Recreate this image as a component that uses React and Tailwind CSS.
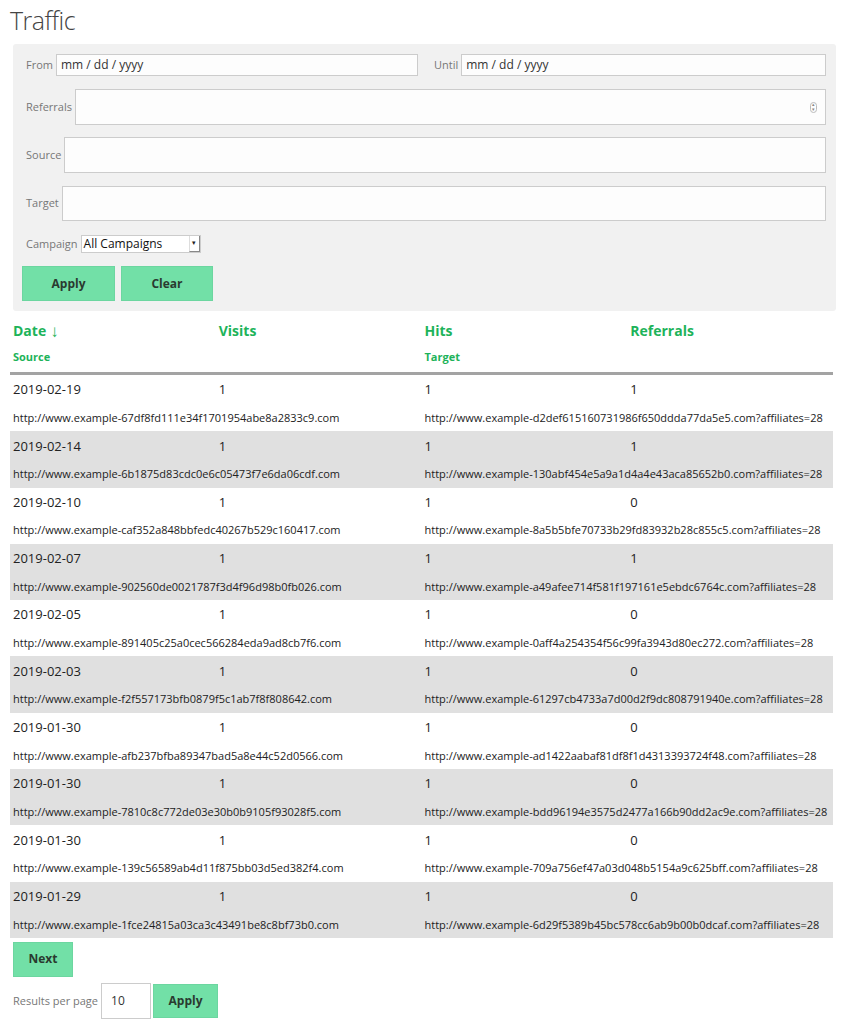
import React from 'react';

const ROWS = [
  ['2019-02-19', '1', '1', '1', 'http://www.example-67df8fd111e34f1701954abe8a2833c9.com', 'http://www.example-d2def615160731986f650ddda77da5e5.com?affiliates=28'],
  ['2019-02-14', '1', '1', '1', 'http://www.example-6b1875d83cdc0e6c05473f7e6da06cdf.com', 'http://www.example-130abf454e5a9a1d4a4e43aca85652b0.com?affiliates=28'],
  ['2019-02-10', '1', '1', '0', 'http://www.example-caf352a848bbfedc40267b529c160417.com', 'http://www.example-8a5b5bfe70733b29fd83932b28c855c5.com?affiliates=28'],
  ['2019-02-07', '1', '1', '1', 'http://www.example-902560de0021787f3d4f96d98b0fb026.com', 'http://www.example-a49afee714f581f197161e5ebdc6764c.com?affiliates=28'],
  ['2019-02-05', '1', '1', '0', 'http://www.example-891405c25a0cec566284eda9ad8cb7f6.com', 'http://www.example-0aff4a254354f56c99fa3943d80ec272.com?affiliates=28'],
  ['2019-02-03', '1', '1', '0', 'http://www.example-f2f557173bfb0879f5c1ab7f8f808642.com', 'http://www.example-61297cb4733a7d00d2f9dc808791940e.com?affiliates=28'],
  ['2019-01-30', '1', '1', '0', 'http://www.example-afb237bfba89347bad5a8e44c52d0566.com', 'http://www.example-ad1422aabaf81df8f1d4313393724f48.com?affiliates=28'],
  ['2019-01-30', '1', '1', '0', 'http://www.example-7810c8c772de03e30b0b9105f93028f5.com', 'http://www.example-bdd96194e3575d2477a166b90dd2ac9e.com?affiliates=28'],
  ['2019-01-30', '1', '1', '0', 'http://www.example-139c56589ab4d11f875bb03d5ed382f4.com', 'http://www.example-709a756ef47a03d048b5154a9c625bff.com?affiliates=28'],
  ['2019-01-29', '1', '1', '0', 'http://www.example-1fce24815a03ca3c43491be8c8bf73b0.com', 'http://www.example-6d29f5389b45bc578cc6ab9b00b0dcaf.com?affiliates=28'],
];

const FONT = "font-['Open_Sans',Roboto,sans-serif]";

function Field({ label, className = 'h-[36px]', children }) {
  return (
    <div className="flex items-center gap-[3px]">
      <span className="text-[11px] text-[#777] whitespace-nowrap">{label}</span>
      <div className={`flex-1 flex items-center bg-[#fdfdfd] border border-[#ccc] ${className}`}>
        {children}
      </div>
    </div>
  );
}

export default function App() {
  return (
    <div className={`${FONT} bg-white w-[847px] min-h-[1024px] text-[#333]`}>
      <h1 className="pl-[10px] pt-[2px] h-[44px] text-[25px] font-light text-[#444] tracking-[-0.5px]">Traffic</h1>

      {/* Filters */}
      <div className="ml-[13px] w-[823px] bg-[#f1f1f1] rounded-[3px] pl-[13px] pr-[10px] pt-[10px] pb-[10px] flex flex-col">
        <div className="grid grid-cols-2 gap-x-4">
          <Field label="From" className="h-[22px]">
            <span className="pl-[4px] text-[12px] text-[#333]">mm / dd / yyyy</span>
          </Field>
          <Field label="Until" className="h-[22px]">
            <span className="pl-[4px] text-[12px] text-[#333]">mm / dd / yyyy</span>
          </Field>
        </div>
        <div className="mt-[13px]">
          <Field label="Referrals">
            <div className="ml-auto mr-[8px] w-[7px] h-[11px] rounded-full border border-[#bbb] flex flex-col items-center justify-center text-[5px] leading-[5px] text-[#888]">
              <span>▴</span><span>▾</span>
            </div>
          </Field>
        </div>
        <div className="mt-[12px]"><Field label="Source" /></div>
        <div className="mt-[13px]"><Field label="Target" className="h-[35px]" /></div>
        <div className="mt-[14px] flex items-center gap-[3px]">
          <span className="text-[11px] text-[#777]">Campaign</span>
          <div className="w-[120px] h-[18px] bg-white border border-[#ccc] flex items-center justify-between">
            <span className="pl-[2px] text-[12px] text-[#111]">All Campaigns</span>
            <span className="w-[11px] h-[16px] border-l border-[#ddd] border-b border-r border-b-[#888] border-r-[#888] flex items-center justify-center text-[7px] text-[#222]">▾</span>
          </div>
        </div>
        <div className="mt-[13px] ml-[-4px] flex gap-[6px]">
          <button className="w-[93px] h-[35px] bg-[#72e0a7] border border-[#6cd6a0] text-[12px] font-bold text-[#2a3a30]">Apply</button>
          <button className="w-[92px] h-[35px] bg-[#72e0a7] border border-[#6cd6a0] text-[12px] font-bold text-[#2a3a30]">Clear</button>
        </div>
      </div>

      {/* Table */}
      <div className="ml-[10px] w-[823px] mt-[7px]">
        <div className="grid grid-cols-4 h-[25px] items-center text-[14px] font-bold text-[#1db35a]">
          <div className="pl-[3px] flex items-center gap-[4px]">Date <span className="font-light text-[17px] leading-none">↓</span></div>
          <div className="pl-[3px]">Visits</div>
          <div className="pl-[3px]">Hits</div>
          <div className="pl-[3px]">Referrals</div>
        </div>
        <div className="grid grid-cols-4 h-[29px] items-center text-[11px] font-bold text-[#1db35a]">
          <div className="pl-[3px] col-span-2">Source</div>
          <div className="pl-[3px] col-span-2">Target</div>
        </div>
        <div className="h-[3px] bg-[#a3a3a3]" />
        {ROWS.map((r, i) => (
          <div key={i} className={`${i % 2 ? 'bg-[#e0e0e0]' : 'bg-white'} h-[56.3px] flex flex-col`}>
            <div className="grid grid-cols-4 h-[30px] items-center text-[13px] text-[#222]">
              <div className="pl-[3px]">{r[0]}</div>
              <div className="pl-[3px]">{r[1]}</div>
              <div className="pl-[3px]">{r[2]}</div>
              <div className="pl-[3px]">{r[3]}</div>
            </div>
            <div className="grid grid-cols-4 flex-1 items-center text-[11px] text-[#222]">
              <div className="pl-[3px] col-span-2 whitespace-nowrap">{r[4]}</div>
              <div className="pl-[3px] col-span-2 whitespace-nowrap">{r[5]}</div>
            </div>
          </div>
        ))}
      </div>

      {/* Pagination */}
      <div className="pl-[13px] pt-[4px]">
        <button className="w-[60px] h-[35px] bg-[#72e0a7] border border-[#6cd6a0] text-[12px] font-bold text-[#2a3a30]">Next</button>
        <div className="mt-[6px] flex items-center">
          <span className="text-[11px] text-[#777]">Results per page</span>
          <div className="ml-[3px] w-[50px] h-[36px] bg-white border border-[#ccc] flex items-center pl-[9px] text-[12px] text-[#333]">10</div>
          <button className="ml-[2px] w-[65px] h-[34px] bg-[#72e0a7] border border-[#6cd6a0] text-[12px] font-bold text-[#2a3a30]">Apply</button>
        </div>
      </div>
    </div>
  );
}
